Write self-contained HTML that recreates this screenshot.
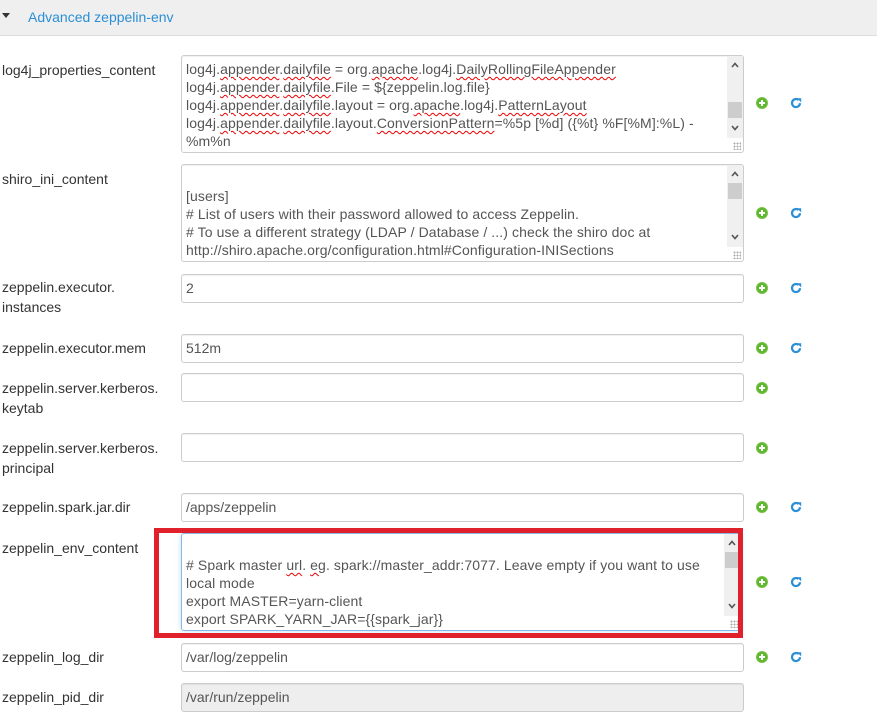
<!DOCTYPE html>
<html><head><meta charset="utf-8"><style>
body{margin:0;width:877px;height:716px;overflow:hidden;background:#fff;font-family:"Liberation Sans",Arial,sans-serif;font-size:14px;color:#333;position:relative}
.hdr{position:absolute;left:0;top:0;width:877px;height:35px;background:#efefef;border-bottom:1px solid #ddd}
.hdr .t{position:absolute;left:28px;top:9px;color:#2a8fd6;font-size:14px}
.hdr .c{position:absolute;left:2px;top:13px;width:0;height:0;border-left:4px solid transparent;border-right:4px solid transparent;border-top:5px solid #333}
.lbl{position:absolute;left:2px;line-height:20px;color:#333}
.box{position:absolute;left:181px;width:563px;border:1px solid #ccc;border-radius:3px;background:#fff;color:#555;box-sizing:border-box;box-shadow:inset 0 1px 1px rgba(0,0,0,.06)}
.inp{height:29px;line-height:27px;padding-left:4px}
.dis{background:#eee}
.ta{height:98px;padding:4px 0 0 4px;line-height:18px;overflow:hidden;white-space:nowrap;letter-spacing:0.1px}
.sb{position:absolute;right:0;top:0;width:16px;height:82px;background:#f0f0f0}
.sb .th{position:absolute;left:1px;width:14px;height:16px;background:#cdcdcd}
.sb svg{position:absolute;left:4px}
.grip{position:absolute;right:2px;bottom:2px;width:8px;height:8px;background:radial-gradient(circle,#aaa 0.8px,transparent 1.1px) 0 0/3px 3px}
.sq{text-decoration:underline wavy #e00;text-decoration-thickness:1px;text-underline-offset:2px}
.plus{position:absolute;left:757px;width:10px;height:10px;border-radius:50%;background:#5cb82e;box-shadow:0 0 0 1px #7ac143}
.plus:before{content:"";position:absolute;left:2px;top:4px;width:6px;height:2px;background:#fff}
.plus:after{content:"";position:absolute;left:4px;top:2px;width:2px;height:6px;background:#fff}
.ref{position:absolute;left:790px;width:12px;height:12px}
.red{position:absolute;left:154px;top:528px;width:589px;height:110px;border:5px solid #e0202a;box-sizing:border-box}
.foc{border-color:#8ab8e6;box-shadow:0 0 6px rgba(102,175,233,.4)}
</style></head><body>
<div class="hdr"><div class="c"></div><div class="t">Advanced zeppelin-env</div></div>

<div class="lbl" style="top:60px">log4j_properties_content</div>
<div class="box ta" style="top:55px">
<div>log4j.<span class="sq">appender</span>.<span class="sq">dailyfile</span> = org.<span class="sq">apache</span>.log4j.<span class="sq">DailyRollingFileAppender</span></div>
<div>log4j.<span class="sq">appender</span>.<span class="sq">dailyfile</span>.File = ${zeppelin.log.file}</div>
<div>log4j.<span class="sq">appender</span>.<span class="sq">dailyfile</span>.layout = org.<span class="sq">apache</span>.log4j.<span class="sq">PatternLayout</span></div>
<div>log4j.<span class="sq">appender</span>.<span class="sq">dailyfile</span>.layout.<span class="sq">ConversionPattern</span>=%5p [%d] ({%t} %F[%M]:%L) -</div>
<div>%m%n</div>
<div class="sb"><svg style="top:6px" width="8" height="6" viewBox="0 0 8 6"><path d="M1 5L4 1.5 7 5" fill="none" stroke="#555" stroke-width="1.6"/></svg><div class="th" style="top:46px"></div><svg style="top:69px" width="8" height="6" viewBox="0 0 8 6"><path d="M1 1L4 4.5 7 1" fill="none" stroke="#555" stroke-width="1.6"/></svg></div><div class="grip"></div>
</div>
<div class="plus" style="top:98px"></div>
<svg class="ref" style="top:97px" viewBox="0 0 12 12"><path d="M10 6.2A4 4 0 1 1 8.6 3" fill="none" stroke="#2a8fd6" stroke-width="2.2"/><path d="M7 1.2L11.2 1.2 11.2 5.4Z" fill="#2a8fd6"/></svg>

<div class="lbl" style="top:169px">shiro_ini_content</div>
<div class="box ta" style="top:164px">
<div>&nbsp;</div><div>[users]</div>
<div># List of users with their password allowed to access Zeppelin.</div>
<div># To use a different strategy (LDAP / Database / ...) check the shiro doc at</div>
<div>http://shiro.apache.org/configuration.html#Configuration-INISections</div>
<div class="sb"><svg style="top:6px" width="8" height="6" viewBox="0 0 8 6"><path d="M1 5L4 1.5 7 5" fill="none" stroke="#555" stroke-width="1.6"/></svg><div class="th" style="top:18px"></div><svg style="top:69px" width="8" height="6" viewBox="0 0 8 6"><path d="M1 1L4 4.5 7 1" fill="none" stroke="#555" stroke-width="1.6"/></svg></div><div class="grip"></div>
</div>
<div class="plus" style="top:208px"></div>
<svg class="ref" style="top:207px" viewBox="0 0 12 12"><path d="M10 6.2A4 4 0 1 1 8.6 3" fill="none" stroke="#2a8fd6" stroke-width="2.2"/><path d="M7 1.2L11.2 1.2 11.2 5.4Z" fill="#2a8fd6"/></svg>

<div class="lbl" style="top:277px">zeppelin.executor.<br>instances</div>
<div class="box inp" style="top:274px">2</div>
<div class="plus" style="top:283px"></div>
<svg class="ref" style="top:282px" viewBox="0 0 12 12"><path d="M10 6.2A4 4 0 1 1 8.6 3" fill="none" stroke="#2a8fd6" stroke-width="2.2"/><path d="M7 1.2L11.2 1.2 11.2 5.4Z" fill="#2a8fd6"/></svg>

<div class="lbl" style="top:338px">zeppelin.executor.mem</div>
<div class="box inp" style="top:334px">512m</div>
<div class="plus" style="top:343px"></div>
<svg class="ref" style="top:342px" viewBox="0 0 12 12"><path d="M10 6.2A4 4 0 1 1 8.6 3" fill="none" stroke="#2a8fd6" stroke-width="2.2"/><path d="M7 1.2L11.2 1.2 11.2 5.4Z" fill="#2a8fd6"/></svg>

<div class="lbl" style="top:378px">zeppelin.server.kerberos.<br>keytab</div>
<div class="box inp" style="top:373px"></div>
<div class="plus" style="top:383px"></div>

<div class="lbl" style="top:438px">zeppelin.server.kerberos.<br>principal</div>
<div class="box inp" style="top:433px"></div>
<div class="plus" style="top:443px"></div>

<div class="lbl" style="top:497px">zeppelin.spark.jar.dir</div>
<div class="box inp" style="top:493px">/apps/zeppelin</div>
<div class="plus" style="top:502px"></div>
<svg class="ref" style="top:501px" viewBox="0 0 12 12"><path d="M10 6.2A4 4 0 1 1 8.6 3" fill="none" stroke="#2a8fd6" stroke-width="2.2"/><path d="M7 1.2L11.2 1.2 11.2 5.4Z" fill="#2a8fd6"/></svg>

<div class="lbl" style="top:538px">zeppelin_env_content</div>
<div class="box ta foc" style="top:533px;height:98px;width:560px">
<div>&nbsp;</div>
<div># Spark master <span class="sq">url</span>. <span class="sq">eg</span>. spark://master_addr:7077. Leave empty if you want to use</div>
<div>local mode</div>
<div>export MASTER=yarn-client</div>
<div>export SPARK_YARN_JAR={{spark_jar}}</div>
<div class="sb"><svg style="top:6px" width="8" height="6" viewBox="0 0 8 6"><path d="M1 5L4 1.5 7 5" fill="none" stroke="#555" stroke-width="1.6"/></svg><div class="th" style="top:18px"></div><svg style="top:69px" width="8" height="6" viewBox="0 0 8 6"><path d="M1 1L4 4.5 7 1" fill="none" stroke="#555" stroke-width="1.6"/></svg></div><div class="grip"></div>
</div>
<div class="red"></div>
<div class="plus" style="top:577px"></div>
<svg class="ref" style="top:576px" viewBox="0 0 12 12"><path d="M10 6.2A4 4 0 1 1 8.6 3" fill="none" stroke="#2a8fd6" stroke-width="2.2"/><path d="M7 1.2L11.2 1.2 11.2 5.4Z" fill="#2a8fd6"/></svg>

<div class="lbl" style="top:647px">zeppelin_log_dir</div>
<div class="box inp" style="top:643px">/var/log/zeppelin</div>
<div class="plus" style="top:652px"></div>
<svg class="ref" style="top:651px" viewBox="0 0 12 12"><path d="M10 6.2A4 4 0 1 1 8.6 3" fill="none" stroke="#2a8fd6" stroke-width="2.2"/><path d="M7 1.2L11.2 1.2 11.2 5.4Z" fill="#2a8fd6"/></svg>

<div class="lbl" style="top:687px">zeppelin_pid_dir</div>
<div class="box inp dis" style="top:683px">/var/run/zeppelin</div>
</body></html>
